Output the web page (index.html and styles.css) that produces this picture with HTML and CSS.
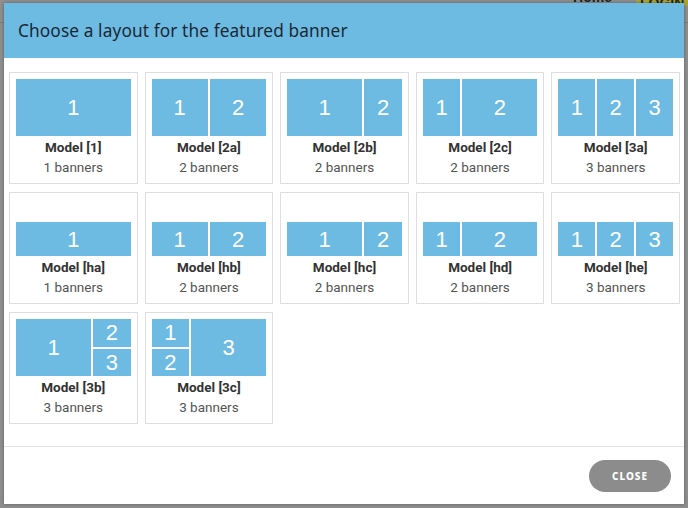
FILE: index.html
```html
<!DOCTYPE html>
<html>
<head>
<meta charset="utf-8">
<link rel="stylesheet" href="styles.css">
</head>
<body>
<div class="page">
  <div class="topnav">
    <span class="nav-home">Home</span>
    <span class="nav-login">LOGIN</span>
  </div>
</div>
<div class="modal">
  <div class="modal-header">
    <h1 class="modal-title">Choose a layout for the featured banner</h1>
  </div>
  <div class="modal-body">
    <div class="grid">
      <div class="card">
        <div class="preview"><div class="row full"><div class="cell f1">1</div></div></div>
        <div class="name">Model [1]</div><div class="count">1 banners</div>
      </div>
      <div class="card">
        <div class="preview"><div class="row full"><div class="cell f1">1</div><div class="cell f1">2</div></div></div>
        <div class="name">Model [2a]</div><div class="count">2 banners</div>
      </div>
      <div class="card">
        <div class="preview"><div class="row full"><div class="cell f2">1</div><div class="cell f1">2</div></div></div>
        <div class="name">Model [2b]</div><div class="count">2 banners</div>
      </div>
      <div class="card">
        <div class="preview"><div class="row full"><div class="cell f1">1</div><div class="cell f2">2</div></div></div>
        <div class="name">Model [2c]</div><div class="count">2 banners</div>
      </div>
      <div class="card">
        <div class="preview"><div class="row full"><div class="cell f1">1</div><div class="cell f1">2</div><div class="cell f1">3</div></div></div>
        <div class="name">Model [3a]</div><div class="count">3 banners</div>
      </div>

      <div class="card">
        <div class="preview"><div class="row half"><div class="cell f1">1</div></div></div>
        <div class="name">Model [ha]</div><div class="count">1 banners</div>
      </div>
      <div class="card">
        <div class="preview"><div class="row half"><div class="cell f1">1</div><div class="cell f1">2</div></div></div>
        <div class="name">Model [hb]</div><div class="count">2 banners</div>
      </div>
      <div class="card">
        <div class="preview"><div class="row half"><div class="cell f2">1</div><div class="cell f1">2</div></div></div>
        <div class="name">Model [hc]</div><div class="count">2 banners</div>
      </div>
      <div class="card">
        <div class="preview"><div class="row half"><div class="cell f1">1</div><div class="cell f2">2</div></div></div>
        <div class="name">Model [hd]</div><div class="count">2 banners</div>
      </div>
      <div class="card">
        <div class="preview"><div class="row half"><div class="cell f1">1</div><div class="cell f1">2</div><div class="cell f1">3</div></div></div>
        <div class="name">Model [he]</div><div class="count">3 banners</div>
      </div>

      <div class="card">
        <div class="preview"><div class="row full">
          <div class="cell f2">1</div>
          <div class="col f1"><div class="cell f1">2</div><div class="cell f1">3</div></div>
        </div></div>
        <div class="name">Model [3b]</div><div class="count">3 banners</div>
      </div>
      <div class="card">
        <div class="preview"><div class="row full">
          <div class="col f1"><div class="cell f1">1</div><div class="cell f1">2</div></div>
          <div class="cell f2">3</div>
        </div></div>
        <div class="name">Model [3c]</div><div class="count">3 banners</div>
      </div>
    </div>
  </div>
  <div class="modal-footer">
    <button class="btn-close">CLOSE</button>
  </div>
</div>
</body>
</html>
```

FILE: styles.css
```css
* { box-sizing: border-box; }
html, body { margin: 0; padding: 0; }
body {
  width: 688px;
  height: 508px;
  background: #8e8e8e;
  overflow: hidden;
  position: relative;
  font-family: Roboto, "Liberation Sans", sans-serif;
}
.page { height: 508px; }
.topnav {
  height: 23px;
  border-bottom: 1px solid #7c7c7c;
  display: flex;
  justify-content: flex-end;
  align-items: flex-start;
  gap: 24px;
  overflow: hidden;
}
.nav-home {
  font: 700 14px "Liberation Sans", sans-serif;
  color: #1e1e1e;
  margin-top: -11px;
}
.nav-login {
  background: #aaa33a;
  width: 52px;
  height: 6px;
  font: 700 14px "Liberation Sans", sans-serif;
  color: #2a2a10;
  line-height: 6px;
  padding-left: 4px;
  overflow: hidden;
}
.modal {
  position: absolute;
  left: 4px;
  top: 3px;
  width: 680px;
  height: 501px;
  background: #fff;
  box-shadow: 0 0 3px rgba(0,0,0,0.35);
  display: flex;
  flex-direction: column;
}
.modal-header {
  height: 55px;
  background: #6dbbe3;
  display: flex;
  align-items: center;
  padding-left: 14px;
}
.modal-title {
  margin: 0;
  font-family: "Noto Sans", sans-serif;
  font-weight: 400;
  font-size: 17.3px;
  color: #1c2833;
  letter-spacing: 0.1px;
}
.modal-body {
  padding: 14px 4px 22px 5px;
  border-bottom: 1px solid #e3e3e3;
}
.grid {
  display: grid;
  grid-template-columns: repeat(5, 1fr);
  column-gap: 7px;
  row-gap: 8px;
}
.card {
  height: 112px;
  border: 1px solid #dedede;
  padding: 6px 6px 5px;
  display: flex;
  flex-direction: column;
  align-items: stretch;
}
.preview {
  height: 57px;
  display: flex;
  flex-direction: column;
  justify-content: flex-end;
}
.row {
  display: flex;
  gap: 2px;
}
.row.full { height: 57px; }
.row.half { height: 34px; }
.col {
  display: flex;
  flex-direction: column;
  gap: 2px;
}
.f1 { flex: 1 1 0; }
.f2 { flex: 2 1 0; }
.cell {
  background: #6dbbe3;
  color: #fff;
  display: flex;
  align-items: center;
  justify-content: center;
  font-family: "Liberation Sans", Arial, sans-serif;
  font-size: 22px;
  line-height: 1;
  padding-top: 1px;
}
.name {
  text-align: center;
  font-weight: 700;
  font-size: 13.5px;
  line-height: 20px;
  padding-top: 1px;
  color: #333;
}
.count {
  text-align: center;
  font-size: 13.5px;
  line-height: 20px;
  color: #555;
}
.modal-footer {
  flex: 1;
  display: flex;
  justify-content: flex-end;
  align-items: center;
  padding-right: 13px;
}
.btn-close {
  width: 82px;
  height: 32px;
  border: none;
  border-radius: 16px;
  background: #8c8c8c;
  color: #fff;
  font-family: "Noto Sans", sans-serif;
  font-weight: 800;
  font-size: 10px;
  letter-spacing: 1px;
  padding: 0;
}
```
